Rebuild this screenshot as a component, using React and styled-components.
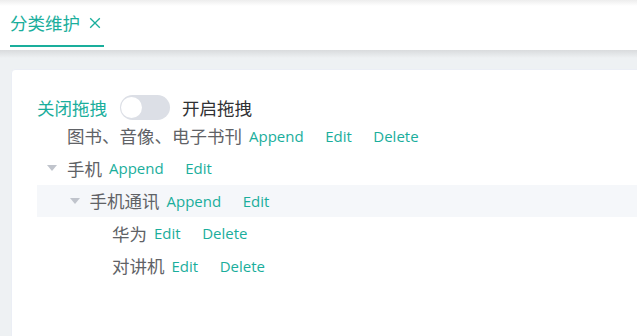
import React from "react";
import styled, { createGlobalStyle } from "styled-components";

const TEAL = "#1aae9c";

const Global = createGlobalStyle`
  html, body { margin: 0; padding: 0; background: #fff; overflow: hidden; }
  body { font-family: "Open Sans", "Noto Sans CJK SC", sans-serif; }
`;

const Page = styled.div`
  width: 637px;
  height: 336px;
  display: flex;
  flex-direction: column;
  overflow: hidden;
`;

const TabBar = styled.div`
  height: 50px;
  flex: none;
  display: flex;
  align-items: flex-start;
  padding-left: 10px;
  background: linear-gradient(#ededed, #ffffff 6px);
  box-sizing: border-box;
`;

const Tab = styled.div`
  height: 46.5px;
  display: flex;
  align-items: center;
  gap: 9px;
  padding-right: 3px;
  padding-top: 1px;
  box-sizing: border-box;
  border-bottom: 2.5px solid ${TEAL};
  color: ${TEAL};
  font-size: 17.5px;
  font-family: "Noto Sans CJK SC", sans-serif;
`;

const Close = styled.svg`
  width: 12px;
  height: 12px;
  margin-top: 1px;
`;

const Main = styled.div`
  flex: 1;
  padding: 19px 0 0 11px;
  background: linear-gradient(#d9dbdd, #eef1f3 8px);
`;

const Card = styled.div`
  width: 700px;
  min-height: 300px;
  background: #fff;
  border: 1px solid #ebeef5;
  border-radius: 4px;
  padding: 24.5px 25px 25px;
  box-sizing: border-box;
`;

const SwitchRow = styled.div`
  height: 25px;
  display: flex;
  align-items: center;
  font-size: 17.5px;
  font-family: "Noto Sans CJK SC", sans-serif;
`;

const SwitchLabel = styled.span`
  color: ${(p) => (p.$active ? TEAL : "#303133")};
  line-height: 25px;
`;

const SwitchTrack = styled.span`
  width: 50px;
  height: 25px;
  border-radius: 12.5px;
  background: #dcdfe6;
  margin: 0 12.5px;
  display: flex;
  align-items: center;
  padding-left: 1.5px;
  box-sizing: border-box;
`;

const SwitchKnob = styled.span`
  width: 21px;
  height: 21px;
  border-radius: 50%;
  background: #fff;
`;

const Tree = styled.div`
  display: flex;
  flex-direction: column;
`;

const Node = styled.div`
  height: 32.5px;
  display: flex;
  align-items: center;
  padding-left: ${(p) => p.$level * 22.5}px;
  background: ${(p) => (p.$hover ? "#f5f7fa" : "transparent")};
`;

const Expander = styled.span`
  width: 30px;
  height: 30px;
  flex: none;
  display: flex;
  align-items: center;
  justify-content: center;
  visibility: ${(p) => (p.$leaf ? "hidden" : "visible")};
`;

const Label = styled.span`
  font-family: "Noto Sans CJK SC", sans-serif;
  font-size: 17.5px;
  color: #606266;
  white-space: nowrap;
`;

const Actions = styled.span`
  display: flex;
  gap: 21.5px;
  margin-left: 7px;
`;

const TextButton = styled.span`
  font-family: "Open Sans", sans-serif;
  font-size: 15px;
  color: ${TEAL};
  white-space: nowrap;
`;

const Caret = () => (
  <svg width="10" height="6" viewBox="0 0 10 6">
    <polygon points="0,0 10,0 5,6" fill="#c0c4cc" />
  </svg>
);

const nodes = [
  { label: "图书、音像、电子书刊", level: 0, leaf: true, actions: ["Append", "Edit", "Delete"] },
  { label: "手机", level: 0, actions: ["Append", "Edit"] },
  { label: "手机通讯", level: 1, hover: true, actions: ["Append", "Edit"] },
  { label: "华为", level: 2, leaf: true, actions: ["Edit", "Delete"] },
  { label: "对讲机", level: 2, leaf: true, actions: ["Edit", "Delete"] },
];

export default function App() {
  return (
    <Page>
      <Global />
      <TabBar>
        <Tab>
          分类维护
          <Close viewBox="0 0 10 10">
            <path d="M1 1 L9 9 M9 1 L1 9" stroke={TEAL} strokeWidth="1.1" fill="none" />
          </Close>
        </Tab>
      </TabBar>
      <Main>
        <Card>
          <SwitchRow>
            <SwitchLabel $active>关闭拖拽</SwitchLabel>
            <SwitchTrack>
              <SwitchKnob />
            </SwitchTrack>
            <SwitchLabel>开启拖拽</SwitchLabel>
          </SwitchRow>
          <Tree>
            {nodes.map((n) => (
              <Node key={n.label} $level={n.level} $hover={n.hover}>
                <Expander $leaf={n.leaf}>
                  <Caret />
                </Expander>
                <Label>{n.label}</Label>
                <Actions>
                  {n.actions.map((a) => (
                    <TextButton key={a}>{a}</TextButton>
                  ))}
                </Actions>
              </Node>
            ))}
          </Tree>
        </Card>
      </Main>
    </Page>
  );
}
